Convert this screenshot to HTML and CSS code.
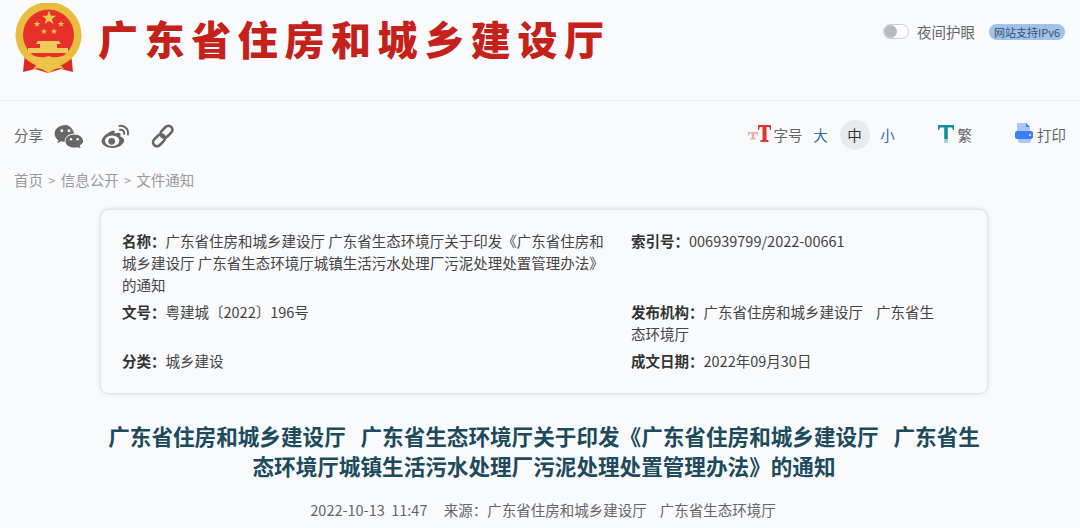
FILE: index.html
```html
<!DOCTYPE html>
<html>
<head>
    <title>广东省住房和城乡建设厅</title>
    <link rel="stylesheet" href="styles.css">
</head>
<body>
    <header class="top-bar">
        <div class="brand">
            <svg class="emblem" width="68" height="71" viewBox="0 0 68 71">
                <defs>
                    <polygon id="star" points="0,-1 .24,-.31 .95,-.31 .38,.12 .59,.81 0,.4 -.59,.81 -.38,.12 -.95,-.31 -.24,-.31"/>
                </defs>
                <path d="M10 50 L8 69 L20 66 L33 70 L46 66 L58 69 L56 50 Z" fill="#dc2a22"/>
                <circle cx="33.500" cy="32" r="33" fill="#e8bd3e"/>
                <circle cx="33.500" cy="32" r="25.500" fill="#e8302a"/>
                <g fill="#f0c84c">
                    <use href="#star" transform="translate(34 15) scale(7.500)"/>
                    <use href="#star" transform="translate(22 21) scale(3.500)"/>
                    <use href="#star" transform="translate(46 21) scale(3.500)"/>
                    <use href="#star" transform="translate(29 28.500) scale(3.200)"/>
                    <use href="#star" transform="translate(39 28.500) scale(3.200)"/>
                </g>
                <path d="M23 38 H44 L46 41 H42 V45 H53 V50 H13 V45 H25 V41 H21 Z" fill="#f2ca5a"/>
                <path d="M12 54 C18 50 24 57 33.500 53 C43 57 49 50 55 54 C50 58 46 58 44 61 C46 63 48 64 49 66 C43 64 40 66 33.500 70 C27 66 24 64 18 66 C19 64 21 63 23 61 C21 58 17 58 12 54 Z" fill="#eec34a"/>
            </svg>
            <div class="site-name">广东省住房和城乡建设厅</div>
        </div>
        <div class="top-tools">
            <span class="switch"><span class="knob"></span></span>
            <span class="night-label">夜间护眼</span>
            <span class="ipv6">网站支持IPv6</span>
        </div>
    </header>

    <div class="page">
        <div class="tool-row">
            <div class="share">
                <span class="share-label">分享</span>
                <svg class="icon-wechat" width="30" height="24" viewBox="0 0 31 25">
                    <path d="M12 1 C5.500 1 .5 5 .5 10 C.5 13 2 15.200 4.300 16.800 L3.400 20 L7.200 18 C8.400 18.400 9.600 18.600 11 18.600 C10.600 14 14.500 10 20.800 9.800 C19.600 4.800 16 1 12 1 Z" fill="#666"/>
                    <path d="M21 11 C15.500 11 11.800 14.300 11.800 18 C11.800 21.700 15.500 24.600 21 24.600 C22 24.600 23 24.400 24 24.100 L27.500 25 L26.600 22.500 C28.800 21.200 30.200 19.600 30.200 18 C30.200 14.300 26.500 11 21 11 Z" fill="#666"/>
                    <circle cx="8" cy="7" r="1.500" fill="#f9fafc"/><circle cx="15.500" cy="7" r="1.500" fill="#f9fafc"/>
                    <circle cx="17.500" cy="16" r="1.300" fill="#f9fafc"/><circle cx="24.500" cy="16" r="1.300" fill="#f9fafc"/>
                </svg>
                <svg class="icon-weibo" width="29" height="24" viewBox="0 0 30 25">
                    <path d="M12 7 C6 9 .5 14 .5 18 C.5 22 6 25 12 25 C19 25 24 21 24 17 C24 14.500 21.500 13.500 20 13 C21 10.500 20 9 18 9 C16 9 14.500 10 14 10 C14.500 7.500 14 6.300 12 7 Z" fill="#666"/>
                    <ellipse cx="11.500" cy="17.500" rx="7.500" ry="5.500" fill="#f9fafc"/>
                    <circle cx="11" cy="18" r="3.500" fill="#666"/>
                    <path d="M19 2 C24 1 29 5 28 11 M19.500 6 C22 5.500 24.800 7.500 24 10.500" fill="none" stroke="#666" stroke-width="2" stroke-linecap="round"/>
                </svg>
                <svg class="icon-link" width="24" height="24" viewBox="0 0 24 24">
                    <g fill="none" stroke="#666" stroke-width="2.600">
                        <rect x="11.500" y="1" width="8" height="13.500" rx="4" transform="rotate(45 15.500 7.700)"/>
                        <rect x="4" y="9.500" width="8" height="13.500" rx="4" transform="rotate(45 8 16.200)"/>
                    </g>
                </svg>
            </div>
            <div class="font-tools">
                <svg class="icon-size" width="23" height="18" viewBox="0 0 23 18">
                    <path d="M0 7 H10 V10.500 H9 L8.500 8.500 H6.200 V13 H7.500 V14.500 H2.500 V13 H3.800 V8.500 H1.500 L1 10.500 H0 Z" fill="#f2a9a6"/>
                    <path d="M10 0 H23 V5 H22 L21.300 2 H18.500 V15 H20.500 V17 H12.500 V15 H14.500 V2 H11.700 L11 5 H10 Z" fill="#e0322f"/>
                </svg>
                <span class="size-label">字号</span>
                <span class="size-opt big">大</span>
                <span class="size-opt current">中</span>
                <span class="size-opt small">小</span>
                <svg class="icon-trad" width="16" height="18" viewBox="0 0 16 18">
                    <path d="M0 0 H16 V5 H15 L14 2.500 H9.800 V14 H6.200 V2.500 H2 L1 5 H0 Z" fill="#14909c"/>
                    <path d="M6.200 14 H9.800 V18 H6.200 Z" fill="#9ed0d5"/>
                </svg>
                <span class="trad-label">繁</span>
                <svg class="icon-print" width="18" height="20" viewBox="0 0 18 20">
                    <path d="M3 0 H11 L15 4 V9 H2 V1 Q2 0 3 0 Z" fill="#a9c4ff"/>
                    <path d="M11 0 L15 4 H11 Z" fill="#3b7df5"/>
                    <path d="M2 8 H16 Q18 8 18 10 V14 Q18 16 16 16 H2 Q0 16 0 14 V10 Q0 8 2 8 Z" fill="#3b7df5"/>
                    <path d="M3 16 H16 V18 Q16 20 14 20 H5 Q3 20 3 18 Z" fill="#a9c4ff"/>
                    <circle cx="15" cy="12" r="1" fill="#fff"/>
                </svg>
                <span class="print-label">打印</span>
            </div>
        </div>

        <div class="crumbs">
            <span>首页</span><i>&gt;</i><span>信息公开</span><i>&gt;</i><span>文件通知</span>
        </div>

        <div class="info-card">
            <div class="info-item"><b>名称：</b>广东省住房和城乡建设厅 广东省生态环境厅关于印发《广东省住房和城乡建设厅 广东省生态环境厅城镇生活污水处理厂污泥处理处置管理办法》的通知</div>
            <div class="info-item"><b>索引号：</b>006939799/2022-00661</div>
            <div class="info-item"><b>文号：</b>粤建城〔2022〕196号</div>
            <div class="info-item"><b>发布机构：</b>广东省住房和城乡建设厅&nbsp;&nbsp;&nbsp;&nbsp;广东省生态环境厅</div>
            <div class="info-item"><b>分类：</b>城乡建设</div>
            <div class="info-item"><b>成文日期：</b>2022年09月30日</div>
        </div>

        <h1 class="doc-title">广东省住房和城乡建设厅&nbsp;&nbsp;&nbsp;广东省生态环境厅关于印发《广东省住房和城乡建设厅&nbsp;&nbsp;&nbsp;广东省生态环境厅城镇生活污水处理厂污泥处理处置管理办法》的通知</h1>
        <div class="doc-meta">2022-10-13&nbsp;&nbsp;11:47&nbsp;&nbsp;&nbsp;&nbsp;&nbsp;来源：广东省住房和城乡建设厅&nbsp;&nbsp;&nbsp;&nbsp;广东省生态环境厅</div>
    </div>
</body>
</html>
```

FILE: styles.css
```css
html, body { margin: 0; padding: 0; }
body {
    background-color: #f9fafc;
    font-family: "Noto Sans CJK SC", "Noto Sans", sans-serif;
    font-size: 14.5px;
    color: #333;
    height: 528px;
    overflow: hidden;
}
.top-bar {
    display: flex;
    justify-content: space-between;
    align-items: flex-start;
    height: 101px;
    border-bottom: 1px solid #f0f1f3;
    box-sizing: border-box;
    padding: 3px 15px 0 15px;
}
.brand { display: flex; align-items: flex-start; }
.site-name {
    font-weight: 900;
    font-size: 40px;
    line-height: 62px;
    letter-spacing: 6.6px;
    color: #c4211b;
    margin: 4px 0 0 15px;
}
.top-tools { display: flex; align-items: center; margin-top: 18px; }
.switch {
    width: 24px;
    height: 13px;
    border: 1px solid #c8ccd2;
    border-radius: 8px;
    background: #fff;
    display: flex;
    align-items: center;
}
.knob { width: 13px; height: 13px; border-radius: 50%; background: #b5bcc6; }
.night-label { color: #666; margin-left: 8px; }
.ipv6 {
    font-size: 11px;
    line-height: 16px;
    color: #2f5680;
    background: #a3c1e4;
    border-radius: 8px;
    padding: 0 5px;
    margin-left: 14px;
}
.page { padding: 0 14px; }
.tool-row {
    display: flex;
    justify-content: space-between;
    align-items: center;
    height: 70px;
}
.share { display: flex; align-items: center; }
.share-label { color: #666; margin-bottom: 3px; }
.icon-wechat { margin-left: 11px; }
.icon-weibo { margin-left: 17px; }
.icon-link { margin-left: 21px; }
.font-tools { display: flex; align-items: center; color: #666; margin-bottom: 2px; }
.size-label, .trad-label, .print-label { margin-bottom: 2px; }
.icon-size, .icon-trad { margin-bottom: 3px; }
.icon-print { margin-bottom: 4px; }
.size-label { margin-left: 3px; }
.size-opt {
    width: 30px;
    height: 30px;
    line-height: 30px;
    text-align: center;
    border-radius: 50%;
    color: #2f6ca5;
}
.size-opt.big { margin-left: 3px; }
.size-opt.current { background: #e8ebee; color: #333; margin-left: 4px; }
.size-opt.small { margin-left: 3px; }
.icon-trad { margin-left: 35px; }
.trad-label { margin-left: 4px; }
.icon-print { margin-left: 43px; }
.print-label { margin-left: 4px; }
.crumbs {
    display: flex;
    align-items: center;
    line-height: 20px;
    color: #999;
    margin-top: -1px;
}
.crumbs i { font-style: normal; font-size: 12px; margin: 0 5.500px; }
.info-card {
    display: grid;
    grid-template-columns: 486px 312px;
    grid-template-rows: 66px 44px 22px;
    column-gap: 23px;
    row-gap: 5px;
    margin: 20px 79px 0 87px;
    height: 183px;
    box-sizing: border-box;
    padding: 20px 0 0 21px;
    border-radius: 8px;
    background: #f9fafc;
    box-shadow: 0 0 5px rgba(0, 0, 0, 0.2);
    line-height: 22px;
    color: #444;
}
.info-item b { color: #333; }
.doc-title {
    font-size: 21.600px;
    line-height: 30px;
    font-weight: 700;
    color: #1d4a5c;
    text-align: center;
    margin: 28px 79px 0 87px;
}
.doc-meta {
    line-height: 20px;
    color: #666;
    text-align: center;
    margin-top: 19px;
    padding-left: 6px;
}
```
